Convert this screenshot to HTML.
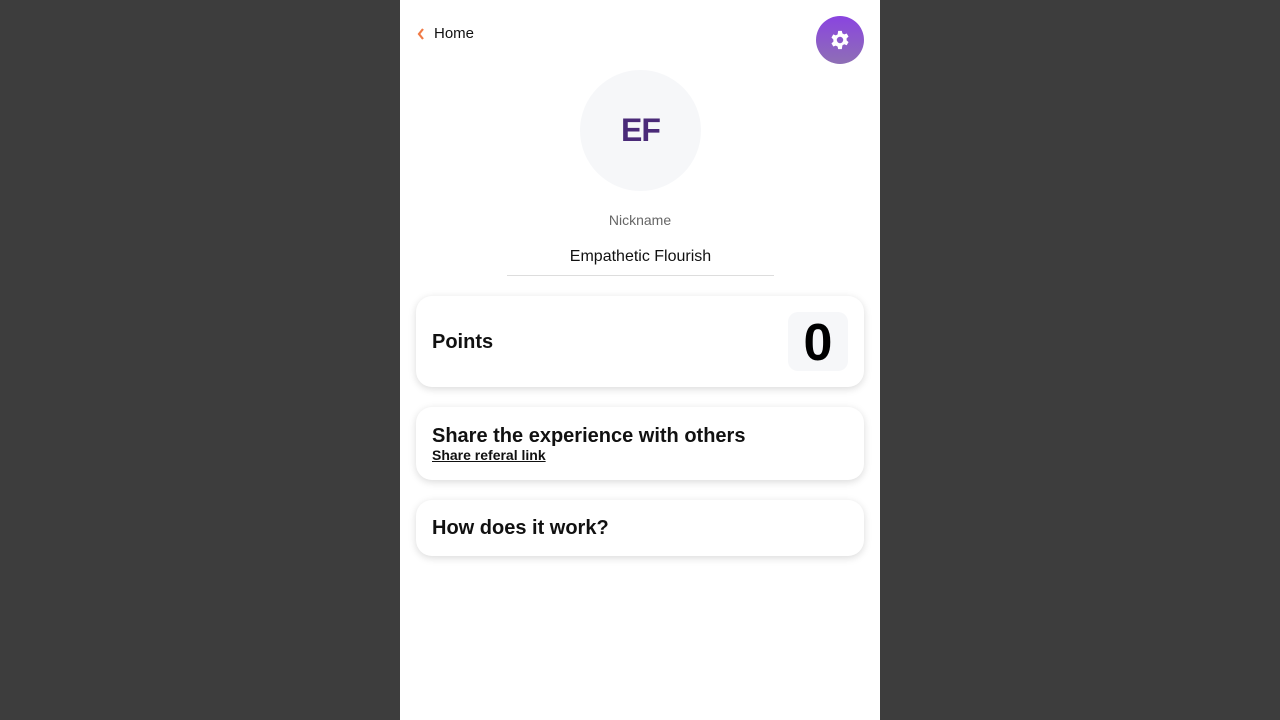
<!DOCTYPE html>
<html><head><style>
*{box-sizing:border-box;margin:0;padding:0}
body{width:1280px;height:720px;background:#3d3d3d;font-family:"Liberation Sans",sans-serif;overflow:hidden}
.app{position:absolute;left:400px;top:0;width:480px;height:720px;background:#fff}
.home{position:absolute;left:16px;top:25px;font-size:15px;color:#111;display:flex;align-items:center}
.gear{position:absolute;left:416px;top:16px;width:48px;height:48px;border-radius:50%;background:linear-gradient(#8a44e0,#8e6fb5);display:flex;align-items:center;justify-content:center}
.av{position:absolute;left:180px;top:70px;width:121px;height:121px;border-radius:50%;background:#f6f7f9;display:flex;align-items:center;justify-content:center;font-weight:bold;font-size:32px;color:#4a2a78;letter-spacing:-1px}
.nick{position:absolute;left:0;width:480px;top:212px;text-align:center;font-size:14px;color:#666}
.name{position:absolute;left:107px;width:267px;top:248px;height:28px;text-align:center;font-size:16px;color:#111;border-bottom:1px solid #ddd}
.card{position:absolute;left:16px;width:448px;background:#fff;border-radius:16px;box-shadow:0 2px 8px rgba(0,0,0,.15);padding:0 16px}
.h{font-weight:bold;font-size:20px;color:#111}
.zero{position:absolute;right:16px;top:16px;width:60px;height:59px;border-radius:10px;background:#f6f7f9;font-size:52px;font-weight:bold;display:flex;align-items:center;justify-content:center;padding-top:2px}
</style></head><body><div class="app">
<div class="home"><svg width="10" height="14" viewBox="0 0 10 14"><path d="M7 2L3 7l4 5" stroke="#f07a45" stroke-width="2.2" fill="none"/></svg><span style="margin-left:8px">Home</span></div>
<div class="gear"><svg width="22" height="22" viewBox="0 0 24 24"><path fill="#fff" fill-rule="evenodd" d="M10 2h4l.6 2.8 2 1.1 2.7-1 2 3.4-2.1 1.9v2.2l2.1 1.9-2 3.4-2.7-1-2 1.1L14 22h-4l-.6-2.8-2-1.1-2.7 1-2-3.4 2.1-1.9v-2.2L2.7 9.3l2-3.4 2.7 1 2-1.1zM12 8.5a3.5 3.5 0 100 7 3.5 3.5 0 000-7z"/></svg></div>
<div class="av">EF</div>
<div class="nick">Nickname</div>
<div class="name">Empathetic Flourish</div>
<div class="card" style="top:296px;height:91px"><div class="h" style="position:absolute;top:35px">Points</div><div class="zero">0</div></div>
<div class="card" style="top:407px;height:73px;padding-top:18px"><div class="h" style="line-height:22px">Share the experience with others</div><div style="font-size:14px;font-weight:bold;text-decoration:underline;color:#111;line-height:17px">Share referal link</div></div>
<div class="card" style="top:500px;height:56px"><div class="h" style="line-height:57px">How does it work?</div></div>
</div></body></html>
